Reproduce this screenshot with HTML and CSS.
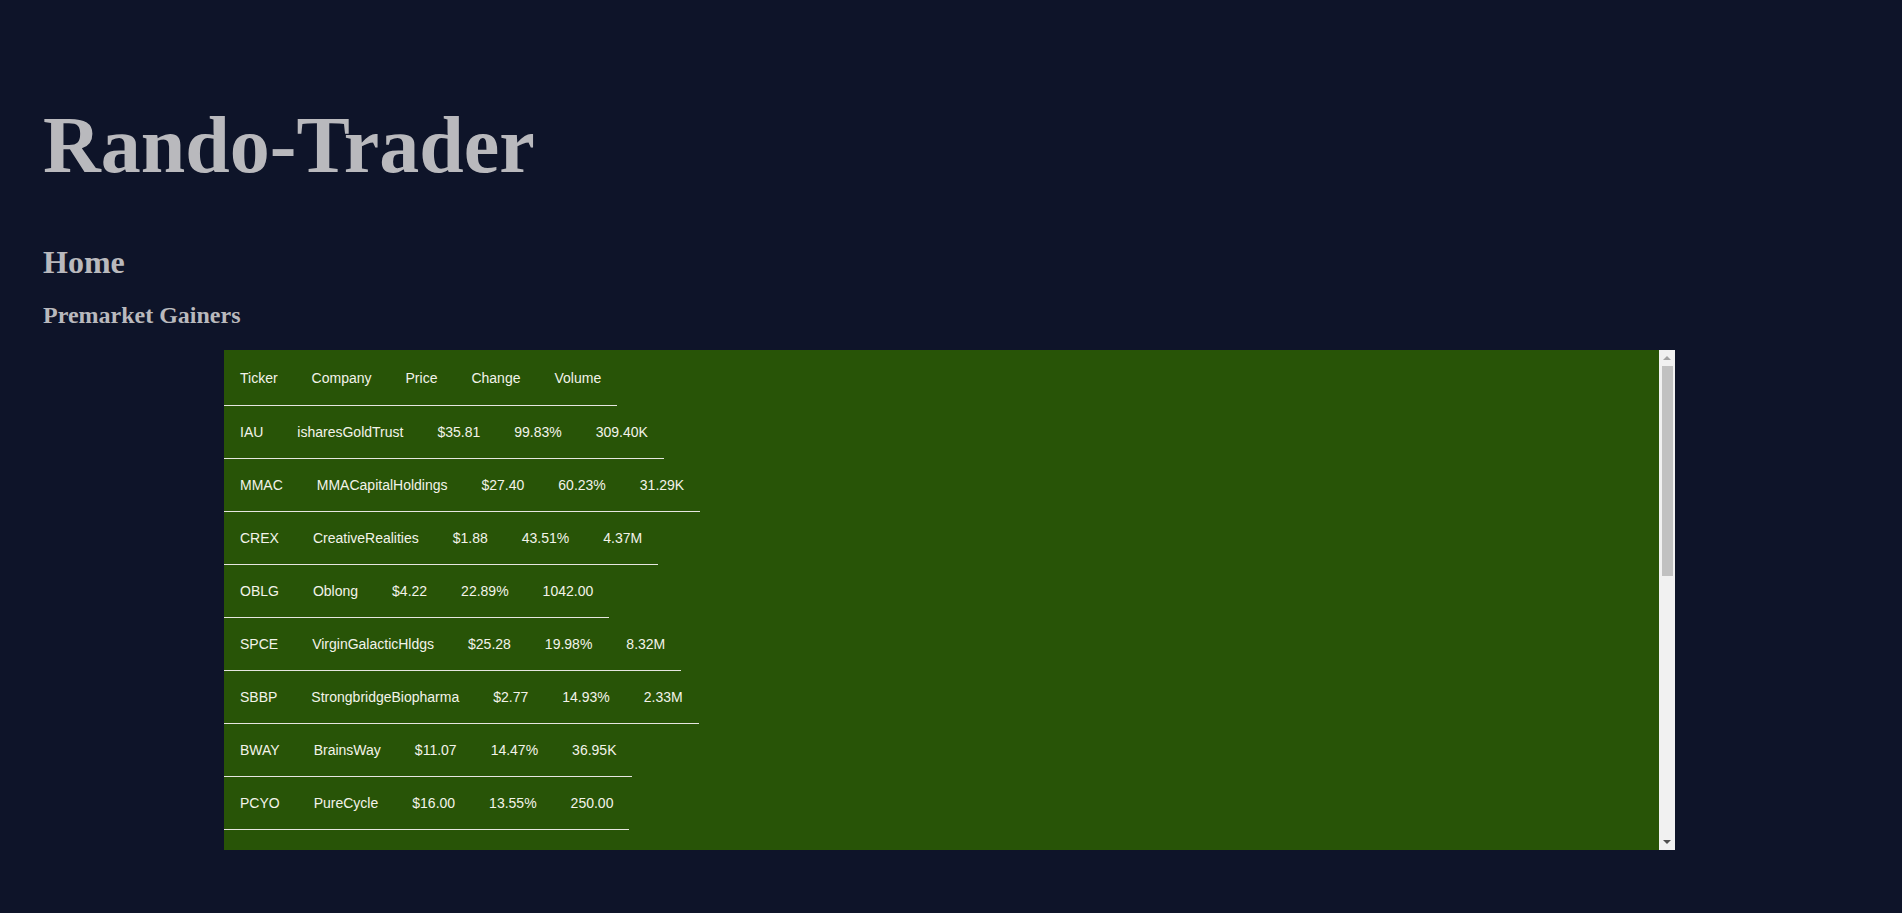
FILE: index.html
```html
<!DOCTYPE html>
<html lang="en">
<head>
<meta charset="utf-8">
<title>Rando-Trader</title>
<link rel="stylesheet" href="styles.css">
</head>
<body>
<div class="page">
  <header class="masthead">
    <h1 class="title">Rando-Trader</h1>
    <h2 class="section-title">Home</h2>
    <h3 class="list-title">Premarket Gainers</h3>
  </header>
  <div class="gainers-frame">
    <div class="gainers">
      <div class="row head"><span class="cell">Ticker</span><span class="cell">Company</span><span class="cell">Price</span><span class="cell">Change</span><span class="cell">Volume</span></div>
      <div class="row"><span class="cell">IAU</span><span class="cell">isharesGoldTrust</span><span class="cell">$35.81</span><span class="cell">99.83%</span><span class="cell">309.40K</span></div>
      <div class="row"><span class="cell">MMAC</span><span class="cell">MMACapitalHoldings</span><span class="cell">$27.40</span><span class="cell">60.23%</span><span class="cell">31.29K</span></div>
      <div class="row"><span class="cell">CREX</span><span class="cell">CreativeRealities</span><span class="cell">$1.88</span><span class="cell">43.51%</span><span class="cell">4.37M</span></div>
      <div class="row"><span class="cell">OBLG</span><span class="cell">Oblong</span><span class="cell">$4.22</span><span class="cell">22.89%</span><span class="cell">1042.00</span></div>
      <div class="row"><span class="cell">SPCE</span><span class="cell">VirginGalacticHldgs</span><span class="cell">$25.28</span><span class="cell">19.98%</span><span class="cell">8.32M</span></div>
      <div class="row"><span class="cell">SBBP</span><span class="cell">StrongbridgeBiopharma</span><span class="cell">$2.77</span><span class="cell">14.93%</span><span class="cell">2.33M</span></div>
      <div class="row"><span class="cell">BWAY</span><span class="cell">BrainsWay</span><span class="cell">$11.07</span><span class="cell">14.47%</span><span class="cell">36.95K</span></div>
      <div class="row"><span class="cell">PCYO</span><span class="cell">PureCycle</span><span class="cell">$16.00</span><span class="cell">13.55%</span><span class="cell">250.00</span></div>
      <div class="row"><span class="cell">SNDL</span><span class="cell">SundialGrowers</span><span class="cell">$1.45</span><span class="cell">12.98%</span><span class="cell">45.62M</span></div>
      <div class="row"><span class="cell">ZOM</span><span class="cell">Zomedica</span><span class="cell">$1.32</span><span class="cell">12.14%</span><span class="cell">18.34M</span></div>
      <div class="row"><span class="cell">OCGN</span><span class="cell">Ocugen</span><span class="cell">$10.41</span><span class="cell">11.45%</span><span class="cell">2.95M</span></div>
      <div class="row"><span class="cell">NAKD</span><span class="cell">NakedBrandGroup</span><span class="cell">$0.95</span><span class="cell">10.76%</span><span class="cell">12.03M</span></div>
      <div class="row"><span class="cell">GME</span><span class="cell">GameStop</span><span class="cell">$52.40</span><span class="cell">9.87%</span><span class="cell">3.11M</span></div>
      <div class="row"><span class="cell">AMC</span><span class="cell">AMCEntertainment</span><span class="cell">$8.63</span><span class="cell">9.12%</span><span class="cell">5.74M</span></div>
      <div class="row"><span class="cell">BB</span><span class="cell">BlackBerry</span><span class="cell">$14.10</span><span class="cell">8.46%</span><span class="cell">1.89M</span></div>
      <div class="row"><span class="cell">NOK</span><span class="cell">Nokia</span><span class="cell">$5.02</span><span class="cell">7.93%</span><span class="cell">4.26M</span></div>
      <div class="row"><span class="cell">TLRY</span><span class="cell">Tilray</span><span class="cell">$22.15</span><span class="cell">7.31%</span><span class="cell">980.12K</span></div>
      <div class="row"><span class="cell">PLUG</span><span class="cell">PlugPower</span><span class="cell">$58.70</span><span class="cell">6.84%</span><span class="cell">765.40K</span></div>
      <div class="row"><span class="cell">RIOT</span><span class="cell">RiotBlockchain</span><span class="cell">$24.66</span><span class="cell">6.52%</span><span class="cell">1.04M</span></div>
      <div class="row"><span class="cell">FCEL</span><span class="cell">FuelCellEnergy</span><span class="cell">$16.33</span><span class="cell">6.05%</span><span class="cell">2.21M</span></div>
    </div>
    <div class="scrollbar" aria-hidden="true">
      <span class="sb-btn"><span class="arrow up"></span></span>
      <div class="sb-track"><span class="sb-thumb"></span></div>
      <span class="sb-btn"><span class="arrow down"></span></span>
    </div>
  </div>
</div>
</body>
</html>
```
FILE: styles.css
```css
html, body {
  background: #0e1429;
}
body {
  margin: 8px;
  font-family: "Liberation Serif", "Times New Roman", serif;
}
.page {
  padding-top: 91px;
}
.masthead {
  padding-left: 35px;
}
.title {
  margin: 0 0 53px;
  font-size: 80px;
  line-height: 92px;
  font-weight: bold;
  color: #b9b9bd;
}
.section-title {
  margin: 0 0 22px;
  font-size: 32px;
  line-height: 36px;
  font-weight: bold;
  color: #b9b9bd;
}
.list-title {
  margin: 0 0 21px;
  font-size: 24px;
  line-height: 27px;
  font-weight: bold;
  color: #b9b9bd;
}
.gainers-frame {
  display: flex;
  margin-left: 216px;
  width: 1451px;
  height: 500px;
  background: #285407;
}
.gainers {
  flex: 1;
  min-width: 0;
  overflow: hidden;
  font-family: "Liberation Sans", Arial, sans-serif;
  font-size: 14px;
  color: #f3f3ea;
}
.row {
  display: flex;
  gap: 2px;
  width: fit-content;
  height: 52px;
  align-items: center;
  border-bottom: 1px solid #e6e6e0;
}
.row.head {
  height: 55px;
}
.cell {
  padding: 0 16px;
  line-height: 16px;
  white-space: nowrap;
}
.scrollbar {
  flex: 0 0 16px;
  display: flex;
  flex-direction: column;
  background: #f1f1f1;
}
.sb-btn {
  flex: 0 0 16px;
  display: flex;
  align-items: center;
  justify-content: center;
}
.arrow {
  width: 0;
  height: 0;
  border-left: 4px solid transparent;
  border-right: 4px solid transparent;
}
.arrow.up {
  border-bottom: 4px solid #a3a3a3;
}
.arrow.down {
  border-top: 4px solid #505050;
}
.sb-track {
  flex: 1;
  padding: 0 2px 0 3px;
}
.sb-thumb {
  display: block;
  height: 210px;
  background: #c1c1c1;
}
```
